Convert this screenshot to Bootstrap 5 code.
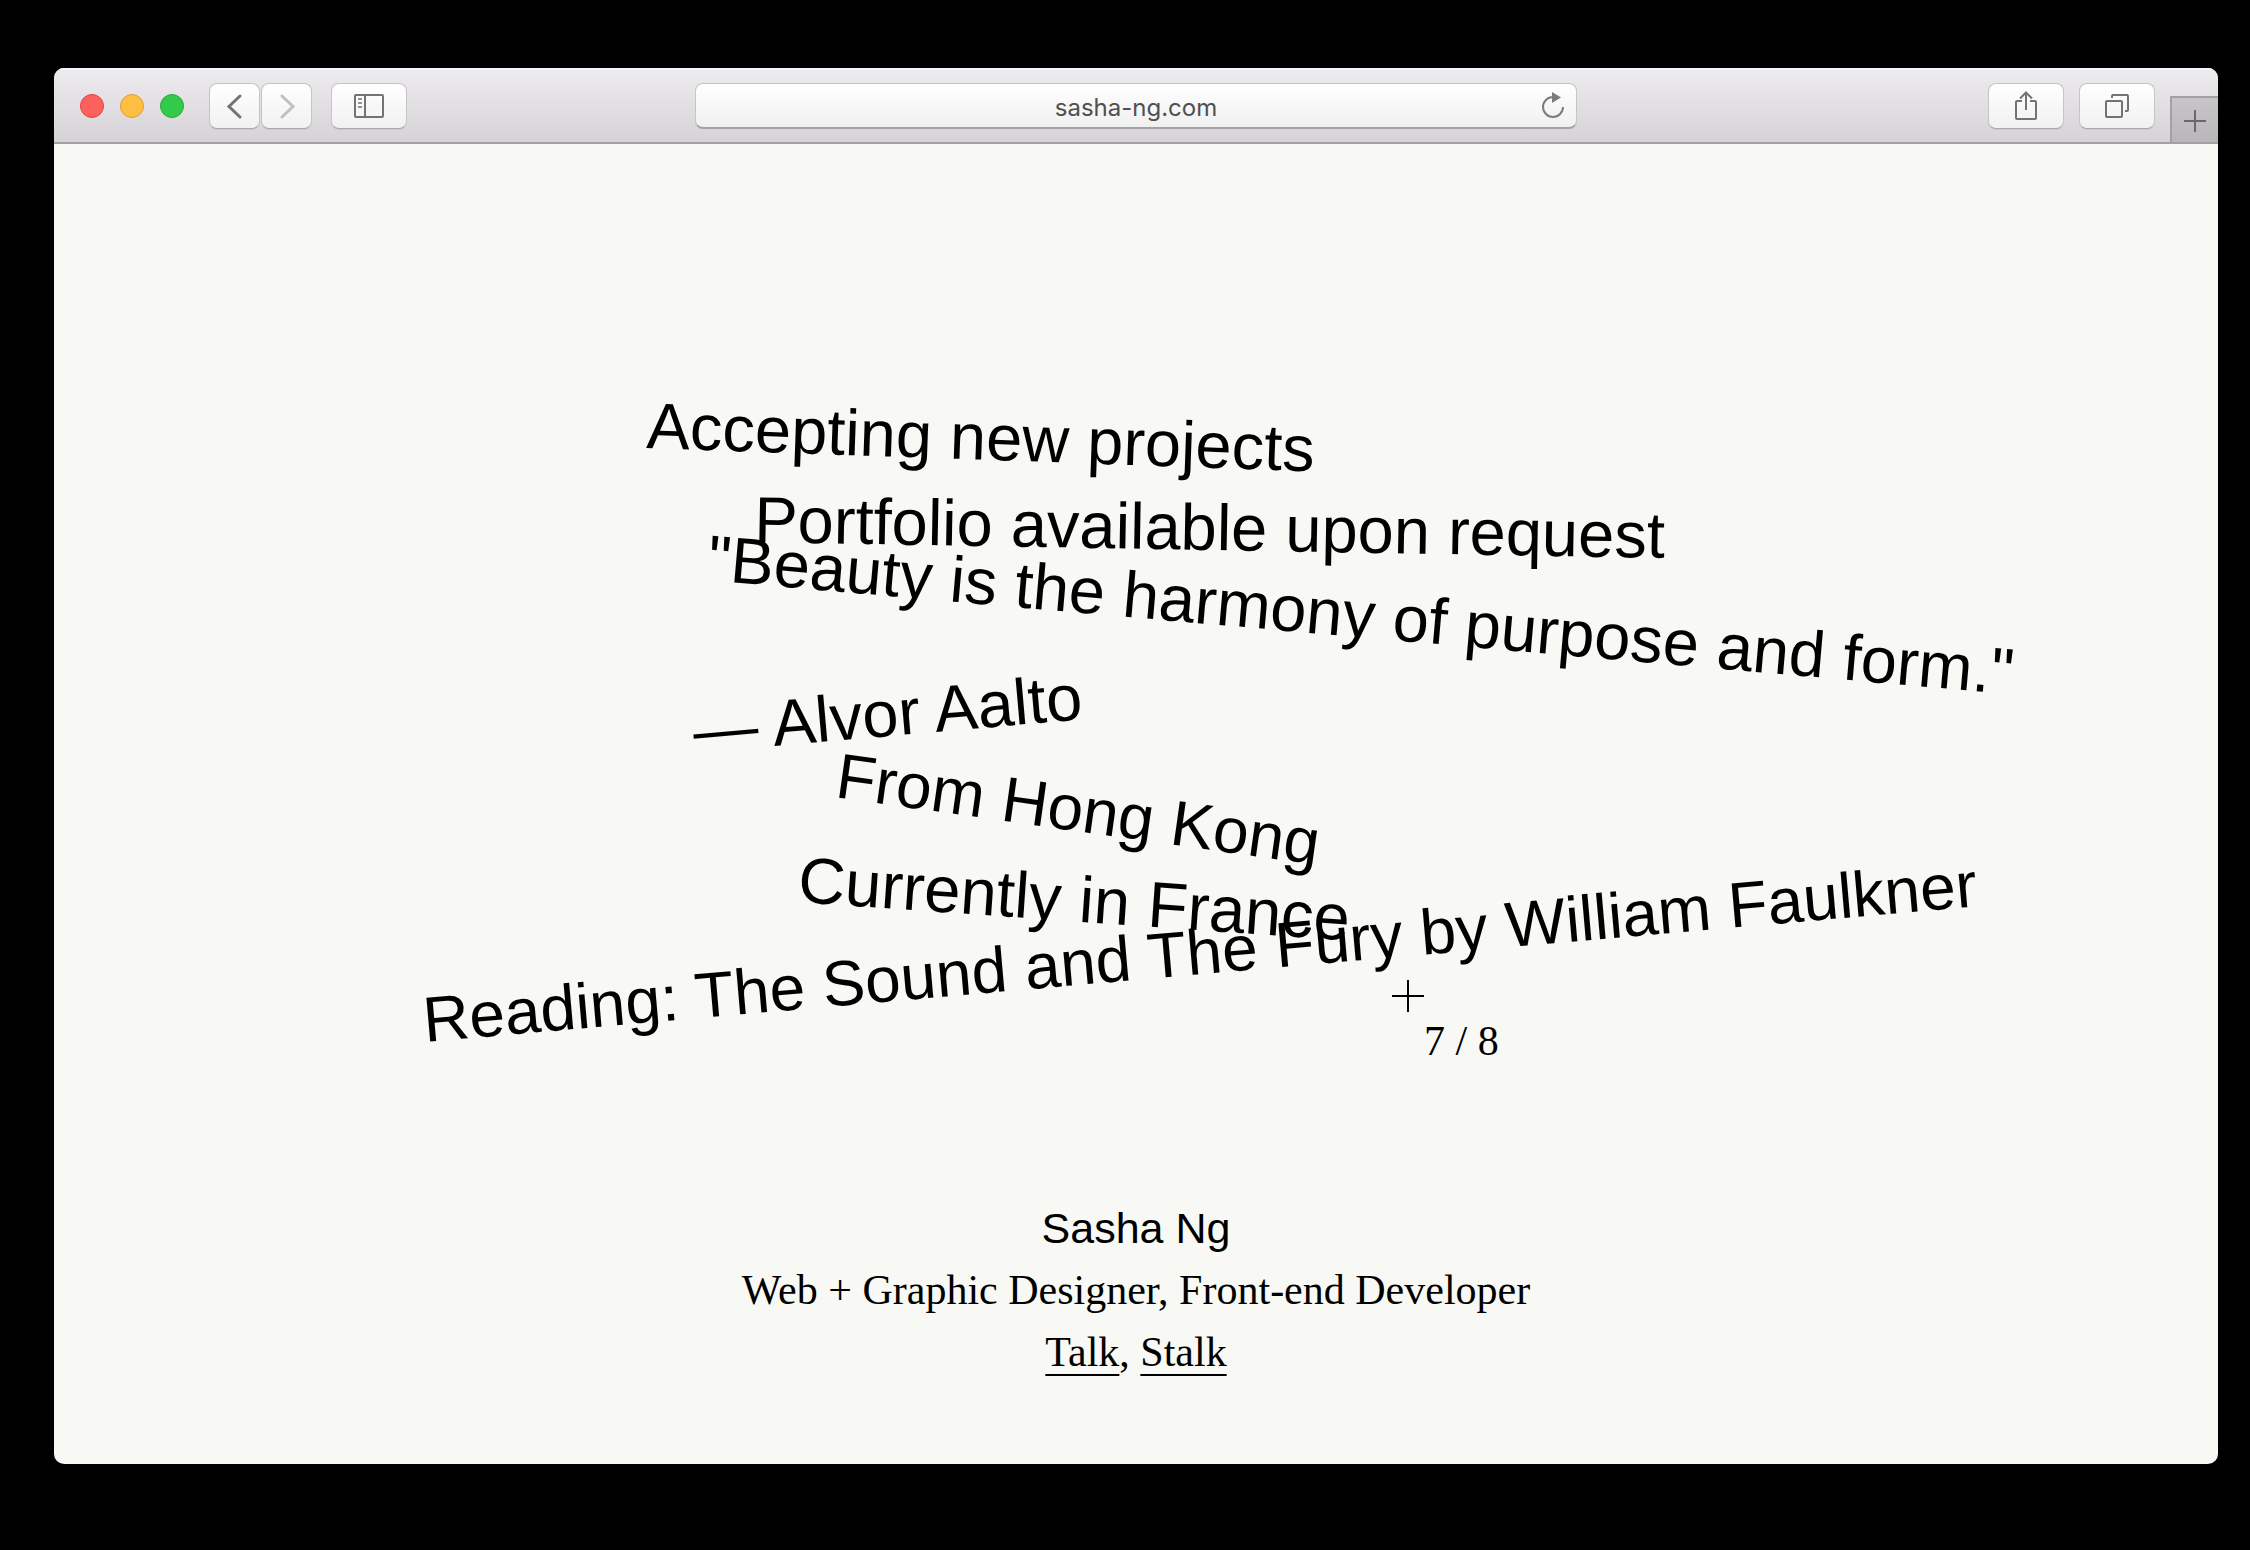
<!DOCTYPE html>
<html lang="en">
<head>
<meta charset="utf-8">
<meta name="viewport" content="width=device-width, initial-scale=1">
<title>Sasha Ng</title>
<link href="https://cdn.jsdelivr.net/npm/bootstrap@5.3.0/dist/css/bootstrap.min.css" rel="stylesheet">
<style>
body { background: #000; color: #000; padding: 68px 32px 86px 54px; }
.browser { background: #f8f9f4; border-radius: 10px; }

/* toolbar */
.toolbar { height: 76px; padding-top: 2px; background: linear-gradient(#eeecef, #d5d3d6); border-bottom: 2px solid #a2a0a3; box-shadow: inset 0 2px 0 #f6f5f7; }
.tools-start, .tools-end { width: 29.6%; }
.tools-start { padding-left: 26px; }
.lights { gap: 16px; margin-right: 25px; }
.light { width: 24px; height: 24px; border-radius: 50%; border: 1px solid; padding: 0; }
.light-close { background: #fc615d; border-color: #e0443f; }
.light-min { background: #fdbf41; border-color: #dd9d33; }
.light-max { background: #34ca49; border-color: #24a936; }
.tool { height: 46px; width: 76px; padding: 0; border: 1px solid #c6c4c7; border-bottom-color: #a9a8aa; border-radius: 8px; background: linear-gradient(#fff, #f1f1f1); color: #737373; box-shadow: 0 1px 0 #cac9cb; }
.tool-nav { width: 51px; }
.tool svg, .reload svg { display: block; margin: auto; fill: none; stroke: currentColor; }
.tool-off { color: #c0c0c0; }
.nav-pair { gap: 1px; margin-right: 19px; }
.address { width: 40.8%; }
.address input { height: 46px; border: 1px solid #c6c4c7; border-bottom: 2px solid #a2a1a3; border-radius: 8px; background: linear-gradient(#fff, #f0f0f0); color: #505050; font: 24px/32px Inter, sans-serif; padding: 3px 48px 0; }
.reload { width: 28px; height: 32px; right: 11px; top: 7px; color: #7c7c7c; }
.tools-end { gap: 15px; }
.newtab { width: 48px; height: 46px; border: 0; border-left: 2px solid #a2a0a3; border-top: 2px solid #a2a0a3; background: linear-gradient(#c7c5c8, #b8b6b9); color: #6a686b; padding: 2px 0 0; }
.newtab svg { display: block; margin: auto; stroke: currentColor; }

/* scattered statements, each turned about the start of its baseline */
.scatter { min-height: 1052px; }
.phrase { position: absolute; margin: 0; font: 400 65px/80px "Liberation Sans", sans-serif; white-space: nowrap; transform-origin: 0 62px; }
.phrase-long { font-size: 64px; }
.p-projects { left: calc(50% - 490px); top: 242px; transform: rotate(2deg); }
.p-portfolio { left: calc(50% - 382px); top: 336px; transform: rotate(1deg); }
.p-quote { left: calc(50% - 430px); top: 374px; transform: rotate(5deg); }
.p-author { left: calc(50% - 441px); top: 547px; transform: rotate(-5deg); }
.p-origin { left: calc(50% - 302px); top: 591px; transform: rotate(8deg); }
.p-home { left: calc(50% - 339px); top: 696px; transform: rotate(4deg); }
.p-reading { left: calc(50% - 711px); top: 836px; transform: rotate(-5deg); }
.serif { font: 42px/62px "Liberation Serif", serif; }
.crosshair { position: absolute; left: calc(50% + 256px); top: 836px; }
.counter { position: absolute; left: calc(50% + 288px); top: 866px; }
.about { padding-bottom: 81px; }
.about h1 { font: 400 43px/62px "Liberation Sans", sans-serif; }
.about a { color: #000; text-decoration: underline 2px; text-underline-offset: 8px; text-decoration-skip-ink: none; }
</style>
</head>
<body class="min-vh-100 d-flex flex-column">
<div class="browser flex-grow-1 d-flex flex-column overflow-hidden">
  <header class="toolbar d-flex align-items-center">
    <div class="tools-start d-flex align-items-center">
      <div class="lights d-flex">
        <button class="light light-close" aria-label="Close"></button>
        <button class="light light-min" aria-label="Minimise"></button>
        <button class="light light-max" aria-label="Zoom"></button>
      </div>
      <div class="nav-pair d-flex">
        <button class="tool tool-nav" aria-label="Back"><svg width="20" height="28" stroke-width="3" stroke-linecap="round"><path d="M15 4 4 14.500 15 25"/></svg></button>
        <button class="tool tool-nav tool-off" aria-label="Forward"><svg width="20" height="28" stroke-width="3" stroke-linecap="round"><path d="M5 4 16 14.500 5 25"/></svg></button>
      </div>
      <button class="tool" aria-label="Sidebar"><svg width="30" height="24" stroke-width="2"><rect x="1" y="1" width="28" height="22" rx="1"/><path d="M11 1v22"/><path d="M4 5h4M4 9h4M4 13h4" stroke-width="1.500"/></svg></button>
    </div>
    <div class="address position-relative">
      <input class="form-control text-center" type="text" value="sasha-ng.com" aria-label="Address">
      <button class="reload btn p-0 border-0 position-absolute" aria-label="Reload"><svg width="28" height="32" stroke-width="2"><path d="M25 17A10 10 0 1 1 15 7"/><path d="M14 2v11l9-5.500z" fill="currentColor" stroke="none"/></svg></button>
    </div>
    <div class="tools-end d-flex justify-content-end align-self-stretch align-items-center">
      <button class="tool" aria-label="Share"><svg width="24" height="32" stroke-width="2"><path d="M8 11H3q-1 0-1 1v16q0 1 1 1h18q1 0 1-1V12q0-1-1-1h-5"/><path d="M12 20V2M6 8.500l6-6 6 6"/></svg></button>
      <button class="tool" aria-label="Show all tabs"><svg width="26" height="26" stroke-width="2"><rect x="2" y="8" width="16" height="16" rx="1"/><path d="M8 5V3q0-1 1-1h14q1 0 1 1v14q0 1-1 1h-2"/></svg></button>
      <button class="newtab align-self-end" aria-label="New tab"><svg width="24" height="24" stroke-width="2"><path d="M12 1v22M1 12h22"/></svg></button>
    </div>
  </header>
  <main class="flex-grow-1 d-flex flex-column">
    <section class="scatter flex-grow-1 position-relative">
      <p class="phrase p-projects">Accepting new projects</p>
      <p class="phrase p-portfolio">Portfolio available upon request</p>
      <p class="phrase p-quote">"Beauty is the harmony of purpose and form."</p>
      <p class="phrase p-author">— Alvor Aalto</p>
      <p class="phrase phrase-long p-origin">From Hong Kong</p>
      <p class="phrase p-home">Currently in France</p>
      <p class="phrase phrase-long p-reading">Reading: The Sound and The Fury by William Faulkner</p>
      <svg class="crosshair" width="32" height="32" stroke="#000" stroke-width="2"><path d="M16 0v32M0 16h32"/></svg>
      <span class="counter serif">7 / 8</span>
    </section>
    <footer class="about serif text-center">
      <h1 class="m-0">Sasha Ng</h1>
      <p class="m-0">Web + Graphic Designer, Front-end Developer</p>
      <p class="m-0"><a href="#talk">Talk</a>, <a href="#stalk">Stalk</a></p>
    </footer>
  </main>
</div>
<script src="https://cdn.jsdelivr.net/npm/bootstrap@5.3.0/dist/js/bootstrap.bundle.min.js"></script>
</body>
</html>
